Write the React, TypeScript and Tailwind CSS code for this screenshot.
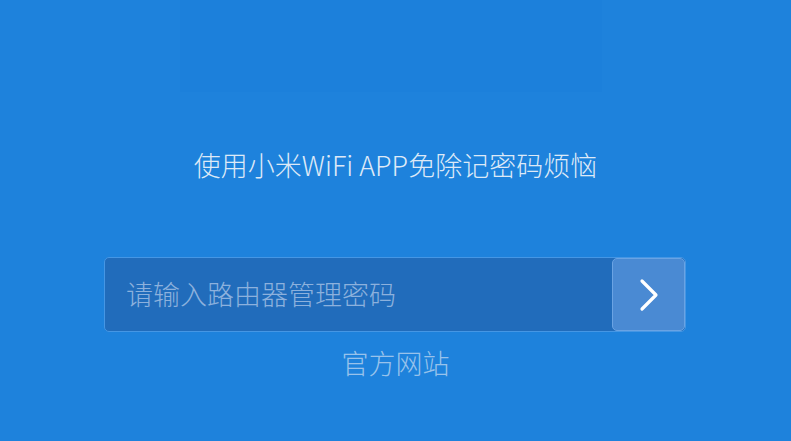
import React from "react";

export default function App() {
  const font = { fontFamily: '"Noto Sans CJK SC", "Noto Sans", sans-serif' };
  return (
    <div className="w-[791px] h-[441px] bg-[#1e82dc] flex flex-col items-center overflow-hidden" style={font}>
      <div className="w-[422px] h-[92px] bg-[#1c80db] self-start ml-[180px]" />
      <div className="mt-[55px] text-[27px] leading-[36px] font-light text-[#dde9f7]">
        使用小米WiFi APP免除记密码烦恼
      </div>
      <div className="mt-[74px] w-[582px] h-[75px] flex rounded-[5px] border border-[#4596e4] bg-[#216cbb] overflow-hidden self-start ml-[104px]">
        <input
          className="flex-1 min-w-0 bg-transparent outline-none pl-[21px] text-[27px] font-light text-white placeholder:text-[#8cb1dd]"
          placeholder="请输入路由器管理密码"
          style={font}
        />
        <button className="w-[73px] h-full bg-[#4a8ad3] border border-[#6aa3e3] rounded-[5px] flex items-center justify-center">
          <svg width="26" height="36" viewBox="0 0 26 36" fill="none">
            <path d="M6 4 L20 18 L6 32" stroke="#ffffff" strokeWidth="3.2" strokeLinecap="round" strokeLinejoin="round" />
          </svg>
        </button>
      </div>
      <div className="mt-[11px] text-[27px] leading-[40px] font-light text-[#98c2eb]">官方网站</div>
    </div>
  );
}
